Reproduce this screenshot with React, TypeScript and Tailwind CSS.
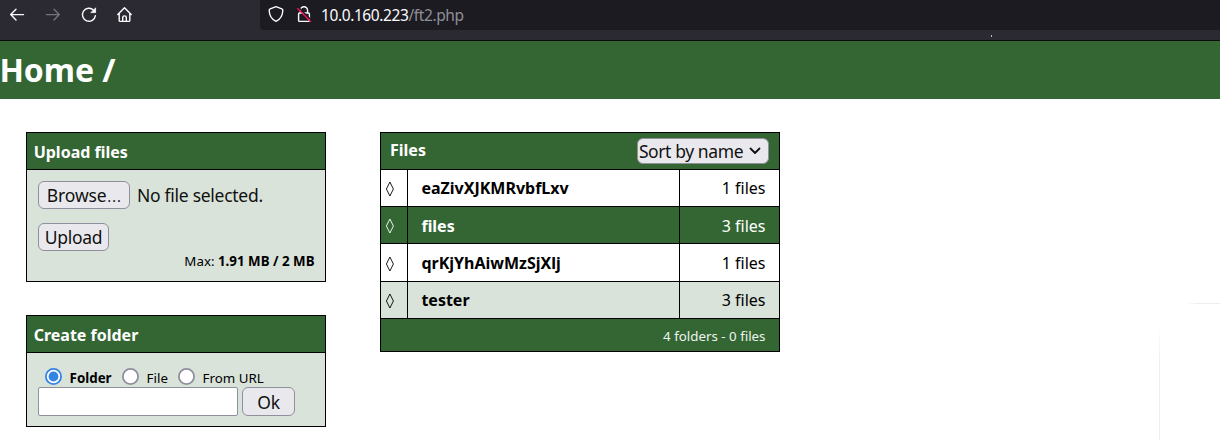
import React from "react";

const rows = [
  { name: "eaZivXJKMRvbfLxv", count: "1 files", style: "h-[37px] bg-white text-black", pad: "leading-[36px]" },
  { name: "files", count: "3 files", style: "h-[37px] bg-[#336633] text-white", pad: "leading-[38px]" },
  { name: "qrKjYhAiwMzSjXlj", count: "1 files", style: "h-[38px] bg-white text-black", pad: "leading-[38px]" },
  { name: "tester", count: "3 files", style: "h-[37px] bg-[#d9e3da] text-black", pad: "leading-[36px]" },
];

const button =
  "flex shrink-0 items-center justify-center rounded-[6px] border border-[#8f8f9d] bg-[#e9e9ed] text-[17.5px] leading-[26px] tracking-[-0.32px] whitespace-nowrap text-[#111]";

function Toolbar() {
  return (
    <header className="flex h-[41px] items-start border-b border-[#0c0c0d] bg-[#2b2a33]">
      <nav className="flex w-[260px] shrink-0 text-[#fbfbfe]">
        <svg width="260" height="30" viewBox="0 0 260 30" fill="none" stroke="currentColor" strokeWidth="1.4" strokeLinecap="round" strokeLinejoin="round">
          <path d="M23.5 14.6H10.7M16 9.3l-5.3 5.3 5.3 5.3" />
          <path d="M46.5 14.6h12.8M54 9.3l5.3 5.3-5.3 5.3" stroke="#74737b" />
          <path d="M93.6 10.2A6.5 6.5 0 1 0 95.4 15.6" />
          <path d="M95.6 8.2v4.4h-4.4z" fill="currentColor" strokeWidth="0.8" />
          <path d="M117.8 14.5l6.7-6.8 6.7 6.8M119.2 13.2v7.2q0 1 1 1h8.6q1 0 1-1V13.2M122.7 21v-3.4q0-1.7 1.8-1.7t1.8 1.7V21" />
        </svg>
      </nav>
      <div className="flex h-[30px] flex-1 items-center rounded-bl-[4px] bg-[#1c1b22]">
        <svg className="shrink-0" width="61" height="30" viewBox="0 0 61 30" fill="none" stroke="#fbfbfe" strokeWidth="1.4" strokeLinejoin="round">
          <path d="M16 6.7l5.8 2.2c.7.3 1 .7 1 1.4-.1 4.9-2.1 9-6.8 11-4.7-2-6.7-6.1-6.8-11 0-.7.3-1.1 1-1.4z" />
          <path d="M40.4 13V10.4a3.6 3.6 0 0 1 7.2 0V13M39.6 13h8.8q1 0 1 1v6.4q0 1-1 1h-8.8q-1 0-1-1V14q0-1 1-1z" />
          <path d="M38.3 7.2l13.6 13.6" stroke="#1c1b22" strokeWidth="1.6" />
          <path d="M37.3 8.2l13.6 13.6" stroke="#f5104f" strokeWidth="1.4" />
        </svg>
        <span className="text-[15.5px] leading-[22px] tracking-[-0.4px] whitespace-nowrap text-[#fbfbfe]">
          10.0.160.223<span className="text-[#8f8f96]">/ft2.php</span>
        </span>
      </div>
    </header>
  );
}

function UploadBox() {
  return (
    <section className="h-[150px] w-[300px] border border-black bg-[#d9e3da]">
      <h2 className="h-[37px] border-b border-black bg-[#336633] pl-[6.67px] text-[16px] leading-[38px] font-bold text-white">Upload files</h2>
      <div className="flex pt-[11px] pl-[11px]">
        <button className={`${button} h-[28px] w-[92px]`}>
          <span className="tracking-[-0.1px]">Browse</span>
          <span className="text-[20px] font-light tracking-[0px]">…</span>
        </button>
        <span className="pl-[7px] text-[17.5px] leading-[29px] tracking-[-0.28px] whitespace-nowrap text-[#111]">No file selected.</span>
      </div>
      <div className="flex h-[41px] pt-[13px] pl-[11px]">
        <button className={`${button} h-[28px] w-[71px]`}>Upload</button>
      </div>
      <p className="pr-[10.5px] text-right text-[13.333px] leading-[20px]">
        Max: <b>1.91 MB / 2 MB</b>
      </p>
    </section>
  );
}

function Radio({ on = false }: { on?: boolean }) {
  return (
    <svg className="mt-[-2px] shrink-0" width="17" height="17" viewBox="0 0 17 17">
      <circle cx="8.5" cy="8.5" r="7.6" fill="#fff" stroke={on ? "#3584e4" : "#8f8f9d"} strokeWidth="1.8" />
      {on && <circle cx="8.5" cy="8.5" r="4.9" fill="#3584e4" />}
    </svg>
  );
}

function CreateBox() {
  return (
    <section className="h-[112px] w-[300px] border border-black bg-[#d9e3da]">
      <h2 className="h-[37px] border-b border-black bg-[#336633] pl-[6.67px] text-[16px] leading-[38px] font-bold text-white">Create folder</h2>
      <div className="flex h-[34px] pt-[17px] pl-[18px] text-[13.333px] leading-[17px] whitespace-nowrap">
        <label className="flex w-[77px] gap-[7.6px]"><Radio on /><b>Folder</b></label>
        <label className="flex w-[56px] gap-[7.6px]"><Radio /><span>File</span></label>
        <label className="flex gap-[7.6px]"><Radio /><span>From URL</span></label>
      </div>
      <div className="flex gap-[4px] pl-[11px]">
        <input aria-label="Name" className="h-[29px] w-[200px] rounded-[2px] border border-[#8f8f9d] bg-white px-1" />
        <button className={`${button} h-[29px] w-[53px]`}>Ok</button>
      </div>
    </section>
  );
}

function FileTable() {
  return (
    <section className="h-[220px] w-[400px] border border-black bg-[#336633] text-[16px]">
      <div className="flex h-[37px] items-start justify-between border-b border-black pr-[10px] pl-[9px] text-white">
        <h2 className="leading-[34px] font-bold">Files</h2>
        <button className={`${button} mt-[5px] h-[26px] w-[132px] gap-[6px] pr-[6px]`}>
          <span className="tracking-[-0.4px]">Sort by name</span>
          <svg width="12" height="8" viewBox="0 0 12 8" fill="none" stroke="#111" strokeWidth="1.8" strokeLinecap="round" strokeLinejoin="round">
            <path d="M1.5 1.5L6 6l4.5-4.5" />
          </svg>
        </button>
      </div>
      {rows.map((row) => (
        <div key={row.name} className={`flex border-b border-black ${row.pad} ${row.style}`}>
          <span className="flex w-[27px] shrink-0 items-center border-r border-black pt-[2px] pl-[4px]">
            <svg width="9" height="16" viewBox="0 0 9 16" fill="none" stroke="currentColor" strokeWidth="0.9">
              <path d="M4.9 1l3.5 7-3.5 7-3.5-7z" />
            </svg>
          </span>
          <span className="w-[272px] shrink-0 border-r border-black pl-[13.4px] font-bold">{row.name}</span>
          <span className="flex-1 pr-[13.5px] text-right">{row.count}</span>
        </div>
      ))}
      <p className="pr-[13.5px] text-right text-[13.333px] leading-[34px] text-[#eef3ee]">4 folders - 0 files</p>
    </section>
  );
}

export default function App() {
  return (
    <div className="relative h-[440px] w-[1220px] overflow-hidden bg-white font-['Noto_Sans',sans-serif] text-black">
      <Toolbar />
      <span className="absolute top-[35px] left-[991px] h-[2px] w-px bg-[#b5b5ba]" />
      <h1 className="h-[58px] bg-[#336633] text-[32px] leading-[58px] font-bold tracking-[-0.05px] text-white">
        <span className="-ml-[0.6px]">Home /</span>
      </h1>
      <main className="flex items-start gap-[54px] pt-[33px] pl-[26px]">
        <div className="flex flex-col gap-[33px]">
          <UploadBox />
          <CreateBox />
        </div>
        <FileTable />
      </main>
      <span className="absolute top-[303px] left-[1185px] h-px w-[35px] bg-linear-to-r from-white to-[#eeeeee] to-40%" />
      <span className="absolute top-[327px] left-[1159px] h-[113px] w-px bg-linear-to-b from-white to-[#eeeeee] to-30%" />
    </div>
  );
}
